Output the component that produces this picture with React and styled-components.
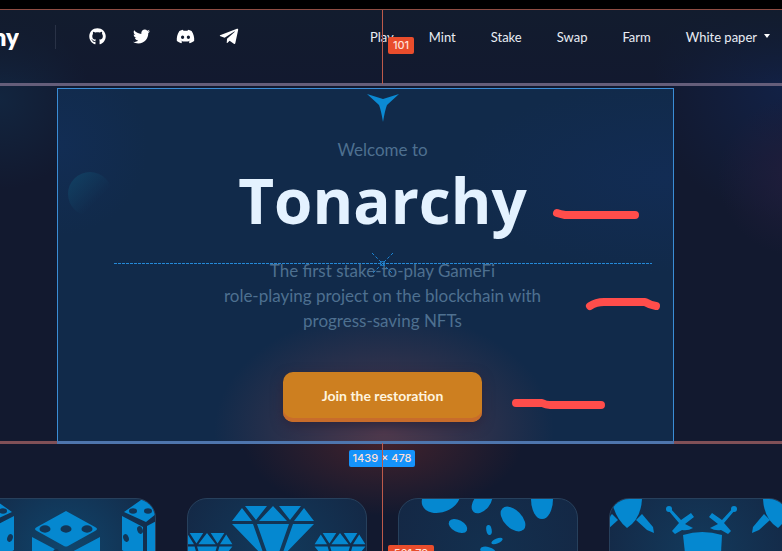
import React from "react";
import styled, { createGlobalStyle } from "styled-components";
import { FaGithub, FaTwitter, FaDiscord, FaTelegramPlane } from "react-icons/fa";

const Global = createGlobalStyle`
  *, *::before, *::after { box-sizing: border-box; }
  body { margin: 0; background: #12192f; font-family: Lato, "Open Sans", sans-serif; }
`;

const Page = styled.div`
  position: relative;
  display: flex;
  flex-direction: column;
  height: 100vh;
  overflow: hidden;
  background:
    radial-gradient(ellipse 140px 75px at 49% 80%, #42222c 0, #42222c99 40%, #42222c00 100%),
    radial-gradient(circle at 102% 32%, #201d3b 0, #201d3b00 80px),
    radial-gradient(circle at 100% 16%, #122145 0, #12214500 130px),
    radial-gradient(circle at 0 18%, #12253f 0, #12253f00 90px),
    #12192f;
`;

const Header = styled.header`
  display: flex;
  align-items: center;
  height: 83px;
  flex: none;
  margin-bottom: 5px;
  padding: 0 12px 19px 0;
  border-top: 9px solid #000;
  background: linear-gradient(#121c2e, #12193200);
`;

const Brand = styled.a`
  display: flex;
  justify-content: flex-end;
  width: 19px;
  overflow: hidden;
  color: #fff;
  font-size: 24px;
  line-height: 32px;
  font-weight: 800;
  text-decoration: none;
`;

const Socials = styled.div`
  display: flex;
  align-items: center;
  gap: 24px;
  height: 24px;
  margin-left: 36px;
  padding-left: 31px;
  border-left: 1px solid #293246;
`;

const SocialLink = styled.a`
  display: flex;
  justify-content: center;
  width: 20px;
  color: #fff;
  font-size: ${(p) => p.$size}px;
`;

const Nav = styled.nav`
  display: flex;
  align-items: center;
  gap: 35px;
  margin-left: auto;
`;

const NavLink = styled.a`
  display: flex;
  align-items: center;
  gap: 7px;
  color: #e9edf4;
  font-size: 13px;
  line-height: 20px;
  text-decoration: none;
  white-space: nowrap;
`;

const Hero = styled.section`
  position: relative;
  display: flex;
  flex-direction: column;
  align-items: center;
  flex: none;
  height: 355px;
  margin: 0 108px 0 57px;
  padding: 5px 0 0 34px;
  border: 1px solid #3a8dd6;
  background:
    radial-gradient(ellipse 170px 120px at 53% 97%, #513a4d 0, #513a4d88 45%, #513a4d00 100%),
    radial-gradient(circle at 0 16%, #122d54 0, #122d5400 90px),
    radial-gradient(ellipse at 100% 25%, #122c54 0, #122c5400 220px),
    #112a4a;
`;

const Planet = styled.div`
  position: absolute;
  left: 10px;
  top: 83px;
  width: 44px;
  height: 44px;
  border-radius: 50%;
  background: linear-gradient(135deg, #114264, #11426400 65%);
`;

const Eyebrow = styled.p`
  margin: 16px 0 0;
  color: #4e7090;
  font-size: 17px;
  line-height: 24px;
`;

const Title = styled.h1`
  margin: 0;
  color: #e4f2ff;
  font-family: "Open Sans", sans-serif;
  font-size: 62px;
  line-height: 76px;
  font-weight: 700;
`;

const Lead = styled.p`
  margin: 20px 0 0;
  color: #4e7090;
  font-size: 17px;
  line-height: 25px;
  text-align: center;
`;

const JoinButton = styled.button`
  width: 199px;
  height: 50px;
  margin-top: 39px;
  padding: 0 0 2px;
  border: 0;
  border-radius: 10px;
  background: #cd7f20;
  box-shadow: inset 0 -4px 0 #c86c2b, 0 4px 12px #2a253d;
  color: #fff4df;
  font: 700 14px/20px Lato, "Open Sans", sans-serif;
`;

const Showcase = styled.section`
  display: grid;
  grid-template-columns: repeat(4, 1fr);
  gap: 31px;
  flex: none;
  margin: 55px -7px 0 -24px;
`;

const Card = styled.article`
  height: 180px;
  overflow: hidden;
  border: 1px solid #27405c;
  border-radius: 20px;
  background: radial-gradient(circle at 50% 30%, ${(p) => p.$tone}, #142744 110px);
  svg { display: block; width: 100%; }
`;

const Rule = styled.div`
  position: absolute;
  left: 0;
  right: 0;
  top: ${(p) => p.$top}px;
  height: ${(p) => p.$h || 3}px;
  background: ${(p) => p.$color};
`;

const HeroEdge = styled(Rule)`
  left: 57px;
  right: 108px;
`;

const Guide = styled.div`
  position: absolute;
  left: 382px;
  top: ${(p) => p.$top}px;
  width: 1px;
  height: ${(p) => p.$h}px;
  background: #bd5a4a;
`;

const Tag = styled.span`
  position: absolute;
  left: ${(p) => p.$left}px;
  top: ${(p) => p.$top}px;
  width: ${(p) => p.$w}px;
  border-radius: 2px;
  background: ${(p) => p.$color};
  color: #ffe0d8;
  font: 500 11px/17px Inter, sans-serif;
  text-align: center;
  white-space: nowrap;
`;

const Markup = styled.svg`
  position: absolute;
  left: 0;
  top: 0;
  pointer-events: none;
`;

const blue = "#0588d0";
const ink = "#123657";

const Die = () => (
  <g>
    <path fill={blue} d="M0 -21 29 -5Q33 -3 29 -1L2 14Q0 15 -2 14L-29 -1Q-33 -3 -29 -5Z" />
    <path fill={blue} d="M-34 5 -2 22V60L-34 42ZM34 5 2 22V60L34 42Z" />
    <g fill={ink}>
      <ellipse cx="-21" cy="-3" rx="5.5" ry="3.7" />
      <ellipse cy="-3" rx="5.5" ry="3.7" />
      <ellipse cx="21" cy="-3" rx="5.5" ry="3.7" />
      <ellipse cx="-10" cy="21" rx="3" ry="4" />
    </g>
  </g>
);

const SmallDie = () => (
  <g>
    <path fill={blue} d="M-2 -13Q0 -14 3 -13L18 -3 3 9 -19 -1Z M-21 3 0 14V50L-21 37Z M4 13 21 4V40L4 50Z" />
    <g fill={ink}>
      <ellipse cx="-10" cy="-2" rx="4" ry="2.7" />
      <ellipse cx="5" cy="-2" rx="4" ry="2.7" />
      <ellipse cx="-3" cy="17" rx="2.7" ry="4" transform="rotate(-20 -3 17)" />
      <ellipse cx="-17" cy="25" rx="2.7" ry="4" transform="rotate(-20 -17 25)" />
    </g>
  </g>
);

const Gem = () => (
  <path
    fill={blue}
    d="M-28 0H-6L-17 14ZM6 0H28L17 14ZM-31 2 -21 15H-41ZM31 2 21 15H41ZM0 0 14 15H-14ZM-41 18H-20L-8 52ZM41 18H20L8 52ZM-16 18H16L4 52H-4Z"
  />
);

const Sword = () => (
  <g fill={blue}>
    <circle r="3" />
    <path d="M-1 1 1 -1 12 11 22 4 25 8 16 15 24 19Q19 22 13 21L6 25 3 22 10 14Z" />
  </g>
);

const Blade = () => <path fill={blue} d="M0 9 6 3 17 16 18 22 11 19Z" />;

const Caret = () => (
  <svg width="6" height="5" aria-hidden="true">
    <path fill="#fff" d="M0 0H6L3 4Z" />
  </svg>
);

const socials = [
  ["GitHub", FaGithub, 17],
  ["Twitter", FaTwitter, 17],
  ["Discord", FaDiscord, 19],
  ["Telegram", FaTelegramPlane, 21],
];

export default function App() {
  return (
    <Page>
      <Global />
      <Header>
        <Brand href="#">hy</Brand>
        <Socials>
          {socials.map(([name, Icon, size]) => (
            <SocialLink key={name} href="#" aria-label={name} $size={size}>
              <Icon />
            </SocialLink>
          ))}
        </Socials>
        <Nav>
          {["Play", "Mint", "Stake", "Swap", "Farm"].map((n) => (
            <NavLink key={n} href="#">{n}</NavLink>
          ))}
          <NavLink href="#">White paper <Caret /></NavLink>
        </Nav>
      </Header>
      <Hero>
        <Planet />
        <svg width="32" height="28" viewBox="0 0 32 28" aria-hidden="true">
          <path fill="#0b8ad3" d="M0 0 16 5 32 0 20 11Q18 16 16 28 14 16 12 11Z" />
        </svg>
        <Eyebrow>Welcome to</Eyebrow>
        <Title>Tonarchy</Title>
        <Lead>
          The first stake-to-play GameFi<br />
          role-playing project on the blockchain with<br />
          progress-saving NFTs
        </Lead>
        <JoinButton type="button">Join the restoration</JoinButton>
      </Hero>
      <Showcase>
        <Card $tone="#10466d">
          <svg viewBox="0 0 178 178" aria-hidden="true">
            <g transform="translate(89 33)"><Die /></g>
            <g transform="translate(166 14)"><SmallDie /></g>
            <g transform="translate(16 14) scale(-1 1)"><SmallDie /></g>
          </svg>
        </Card>
        <Card $tone="#123a5c">
          <svg viewBox="0 0 178 178" aria-hidden="true">
            <g transform="translate(85 7)"><Gem /></g>
            <g transform="translate(19 34) scale(.62 .75)"><Gem /></g>
            <g transform="translate(152 34) scale(.62 .75)"><Gem /></g>
          </svg>
        </Card>
        <Card $tone="#13304f">
          <svg viewBox="0 0 178 178" fill={blue} aria-hidden="true">
            <ellipse cx="42" cy="-1" rx="20" ry="14" transform="rotate(-22 42 -1)" />
            <ellipse cx="83" cy="3" rx="13" ry="8" transform="rotate(-50 83 3)" />
            <ellipse cx="114" cy="20" rx="15" ry="9" transform="rotate(45 114 20)" />
            <ellipse cx="143" cy="0" rx="11" ry="20" />
            <ellipse cx="59" cy="27" rx="10" ry="6" transform="rotate(28 59 27)" />
            <ellipse cx="90" cy="31" rx="2.7" ry="5" transform="rotate(-10 90 31)" />
            <ellipse cx="98" cy="42" rx="6" ry="2.5" transform="rotate(-22 98 42)" />
            <ellipse cx="89" cy="52" rx="8" ry="4" transform="rotate(15 89 52)" />
          </svg>
        </Card>
        <Card $tone="#133a5c">
          <svg viewBox="0 0 178 178" aria-hidden="true">
            <path fill={blue} d="M4 0H32Q31 20 17 29 7 21 3 7Z" />
            <path fill={blue} d="M174 0H153Q154 20 168 29 178 21 178 7Z" />
            <g transform="translate(26 12)"><Blade /></g>
            <g transform="translate(8 12) scale(-1 1)"><Blade /></g>
            <g transform="translate(160 12) scale(-1 1)"><Blade /></g>
            <g transform="translate(59 10)"><Sword /></g>
            <g transform="translate(124 10) scale(-1 1)"><Sword /></g>
            <path fill={blue} d="M73 36Q92 30 112 36L111 54H75Z" />
          </svg>
        </Card>
      </Showcase>

      <Rule $top={9} $h={1} $color="#8f4d43" />
      <Rule $top={83} $color="#655e7a" />
      <Rule $top={441} $color="#805057" />
      <HeroEdge $top={441} $color="#4e75ad" />
      <Guide $top={10} $h={74} />
      <Markup width="782" height="551" fill="none" aria-hidden="true">
        <path stroke="#2489d8" strokeDasharray="3 1" d="M114 263.500H652" />
        <path stroke="#1c85d5" strokeDasharray="3 2" d="M372 253 393 274M393 253 372 274" />
        <circle cx="382.500" cy="263.500" r="2" stroke="#2489d8" />
        <g stroke="#ff4d4b" strokeWidth="8" strokeLinecap="round" strokeLinejoin="round">
          <path d="M557 213Q560 214 565 215H635" />
          <path d="M590 306Q596 302 604 302H645Q650 305 656 306" />
          <path d="M516 403H542Q546 405 550 405H601" />
        </g>
      </Markup>
      <Tag $left={349} $top={450} $w={66} $color="#1593fb">1439 × 478</Tag>
      <Tag $left={388} $top={37} $w={26} $color="#e94d2c">101</Tag>
      <Guide $top={443} $h={108} />
      <Tag $left={388} $top={545} $w={46} $color="#e94d2c">521.73</Tag>
    </Page>
  );
}
